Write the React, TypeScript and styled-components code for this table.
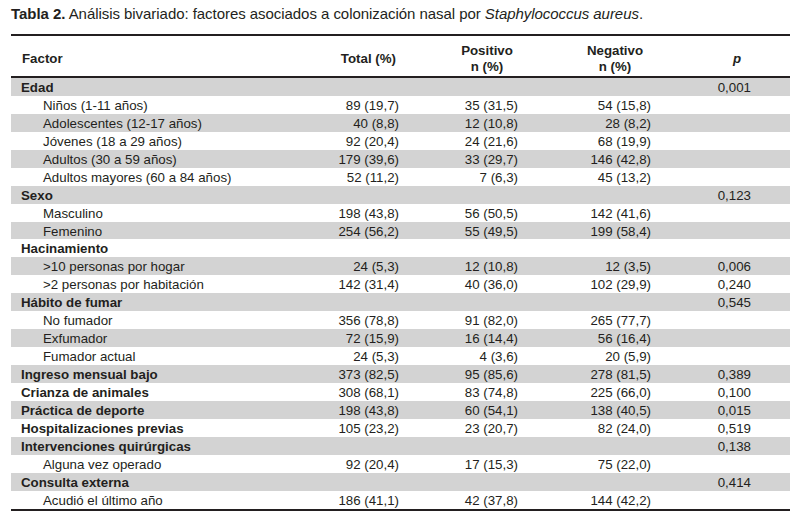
import React from "react";
import styled, { createGlobalStyle } from "styled-components";

const Global = createGlobalStyle`
  html, body { margin: 0; padding: 0; background: #ffffff; }
  body { font-family: "Liberation Sans", Arial, sans-serif; color: #231f20; }
`;

const Page = styled.div`
  width: 798px;
  height: 523px;
  padding: 5px 0 0 11px;
  box-sizing: border-box;
`;

const Title = styled.div`
  font-size: 15px;
  line-height: 17px;
  height: 17px;
  letter-spacing: -0.05px;
  white-space: nowrap;
  b { font-weight: bold; }
  i { font-style: italic; }
`;

const Table = styled.div`
  width: 779px;
  margin-top: 12px;
  border-top: 2.5px solid #231f20;
  border-bottom: 2.5px solid #231f20;
  font-size: 13.3px;
`;

const cols = "289px 99px 119px 133px 100px 39px";

const HeadRow = styled.div`
  display: grid;
  grid-template-columns: ${cols};
  height: 42px;
  padding-top: 6px;
  box-sizing: border-box;
  border-bottom: 2px solid #231f20;
  font-weight: bold;
  line-height: 16px;
`;

const HeadCell = styled.div<{ $pl?: number; $pr?: number; $align: string; $italic?: boolean }>`
  display: flex;
  flex-direction: column;
  justify-content: center;
  text-align: ${(p) => p.$align};
  padding-left: ${(p) => p.$pl ?? 0}px;
  padding-right: ${(p) => p.$pr ?? 0}px;
  font-style: ${(p) => (p.$italic ? "italic" : "normal")};
  white-space: nowrap;
`;

const Row = styled.div<{ $shaded: boolean }>`
  display: grid;
  grid-template-columns: ${cols};
  box-sizing: border-box;
  height: 17.95px;
  padding-top: 2px;
  line-height: 16.8px;
  background: ${(p) => (p.$shaded ? "#d3d3d3" : "#ffffff")};
`;

const Label = styled.div<{ $group: boolean }>`
  padding-left: ${(p) => (p.$group ? 10 : 32)}px;
  font-weight: ${(p) => (p.$group ? "bold" : "normal")};
  white-space: nowrap;
`;

const Num = styled.div`
  text-align: right;
  white-space: nowrap;
`;

type R = { label: string; group?: boolean; t?: string; po?: string; n?: string; p?: string };

const rows: R[] = [
  { label: "Edad", group: true, p: "0,001" },
  { label: "Niños (1-11 años)", t: "89 (19,7)", po: "35 (31,5)", n: "54 (15,8)" },
  { label: "Adolescentes (12-17 años)", t: "40 (8,8)", po: "12 (10,8)", n: "28 (8,2)" },
  { label: "Jóvenes (18 a 29 años)", t: "92 (20,4)", po: "24 (21,6)", n: "68 (19,9)" },
  { label: "Adultos (30 a 59 años)", t: "179 (39,6)", po: "33 (29,7)", n: "146 (42,8)" },
  { label: "Adultos mayores (60 a 84 años)", t: "52 (11,2)", po: "7 (6,3)", n: "45 (13,2)" },
  { label: "Sexo", group: true, p: "0,123" },
  { label: "Masculino", t: "198 (43,8)", po: "56 (50,5)", n: "142 (41,6)" },
  { label: "Femenino", t: "254 (56,2)", po: "55 (49,5)", n: "199 (58,4)" },
  { label: "Hacinamiento", group: true },
  { label: ">10 personas por hogar", t: "24 (5,3)", po: "12 (10,8)", n: "12 (3,5)", p: "0,006" },
  { label: ">2 personas por habitación", t: "142 (31,4)", po: "40 (36,0)", n: "102 (29,9)", p: "0,240" },
  { label: "Hábito de fumar", group: true, p: "0,545" },
  { label: "No fumador", t: "356 (78,8)", po: "91 (82,0)", n: "265 (77,7)" },
  { label: "Exfumador", t: "72 (15,9)", po: "16 (14,4)", n: "56 (16,4)" },
  { label: "Fumador actual", t: "24 (5,3)", po: "4 (3,6)", n: "20 (5,9)" },
  { label: "Ingreso mensual bajo", group: true, t: "373 (82,5)", po: "95 (85,6)", n: "278 (81,5)", p: "0,389" },
  { label: "Crianza de animales", group: true, t: "308 (68,1)", po: "83 (74,8)", n: "225 (66,0)", p: "0,100" },
  { label: "Práctica de deporte", group: true, t: "198 (43,8)", po: "60 (54,1)", n: "138 (40,5)", p: "0,015" },
  { label: "Hospitalizaciones previas", group: true, t: "105 (23,2)", po: "23 (20,7)", n: "82 (24,0)", p: "0,519" },
  { label: "Intervenciones quirúrgicas", group: true, p: "0,138" },
  { label: "Alguna vez operado", t: "92 (20,4)", po: "17 (15,3)", n: "75 (22,0)" },
  { label: "Consulta externa", group: true, p: "0,414" },
  { label: "Acudió el último año", t: "186 (41,1)", po: "42 (37,8)", n: "144 (42,2)" },
];

export default function App() {
  return (
    <>
      <Global />
      <Page>
        <Title>
          <b>Tabla 2.</b> Análisis bivariado: factores asociados a colonización nasal por{" "}
          <i>Staphylococcus aureus</i>.
        </Title>
        <Table>
          <HeadRow>
            <HeadCell $align="left" $pl={11}>Factor</HeadCell>
            <HeadCell $align="right" $pr={3}>Total (%)</HeadCell>
            <HeadCell $align="center" $pl={57}>
              <span>Positivo</span>
              <span>n (%)</span>
            </HeadCell>
            <HeadCell $align="center" $pl={61}>
              <span>Negativo</span>
              <span>n (%)</span>
            </HeadCell>
            <HeadCell $align="center" $pl={72} $italic>p</HeadCell>
            <HeadCell $align="left" />
          </HeadRow>
          {rows.map((r, i) => (
            <Row key={i} $shaded={i % 2 === 0}>
              <Label $group={!!r.group}>{r.label}</Label>
              <Num>{r.t ?? ""}</Num>
              <Num>{r.po ?? ""}</Num>
              <Num>{r.n ?? ""}</Num>
              <Num>{r.p ?? ""}</Num>
              <div />
            </Row>
          ))}
        </Table>
      </Page>
    </>
  );
}
